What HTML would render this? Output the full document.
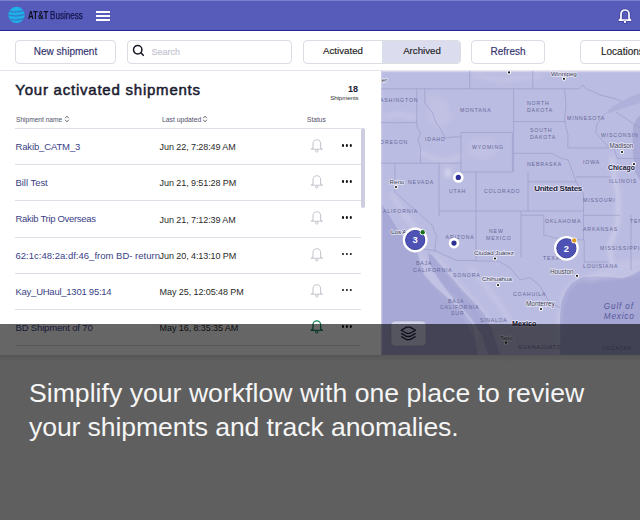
<!DOCTYPE html>
<html><head><meta charset="utf-8">
<style>
*{box-sizing:border-box;margin:0;padding:0}
html,body{width:640px;height:520px;overflow:hidden;background:#eeeeee;font-family:"Liberation Sans",sans-serif}
.abs{position:absolute}
#hdr{left:0;top:0;width:640px;height:31px;background:#575bba;border-bottom:1.6px solid #24249a}
#bar{left:0;top:31px;width:640px;height:40px;background:#fff;border-bottom:1px solid #e6e6ee}
.btn{position:absolute;border:1px solid #dcdce4;border-radius:4px;background:#fff;text-align:center;color:#32326e;font-size:10px;line-height:22px;-webkit-text-stroke:0.15px currentColor}
#left{left:0;top:71px;width:381px;height:284px;background:#fff}
#map{left:381px;top:71px;width:259px;height:284px;background:#aeb0d8;overflow:hidden}
.row{position:absolute;left:15px;width:346px;height:36px;border-top:1px solid #dedee6}
.nm{position:absolute;left:0.5px;top:12.1px;font-size:9.5px;color:#3c3f88;white-space:nowrap}
.dt{position:absolute;left:144.6px;top:13.2px;font-size:9px;letter-spacing:-0.08px;color:#2a2a2a;white-space:nowrap}
#ov{left:0;top:324px;width:640px;height:196px;background:rgba(0,0,0,0.6)}
.cap{left:29px;color:#f5f5f5;font-size:26.6px;line-height:30px;white-space:nowrap}
</style></head><body>
<div id="hdr" class="abs">
  <div class="abs" style="left:0;top:0;width:640px;height:1px;background:#7b7fcc"></div>
  <svg class="abs" style="left:8px;top:6px" width="18" height="18" viewBox="0 0 18 18">
    <defs><clipPath id="gc"><circle cx="8.5" cy="9" r="8.2"/></clipPath></defs>
    <circle cx="8.5" cy="9" r="8.2" fill="#1fb0e8"/>
    <g clip-path="url(#gc)" fill="#3b6fc4" opacity="0.8">
      <path d="M0 4.2 Q8 6.5 17 3.6 L17 5 Q8 8 0 5.4Z"/>
      <path d="M0 8.2 Q8 10.5 17 7.6 L17 9.1 Q8 12 0 9.5Z"/>
      <path d="M0 12.2 Q8 14.5 17 11.6 L17 13.1 Q8 16 0 13.5Z"/>
    </g>
  </svg>
  <div class="abs" style="left:27.5px;top:9.3px;font-size:10.5px;font-weight:bold;color:#0c0c20;white-space:nowrap;transform:scaleX(0.75);transform-origin:0 0">AT&amp;T</div><div class="abs" style="left:49.6px;top:9.3px;font-size:10.5px;color:#14144a;-webkit-text-stroke:0.25px #14144a;white-space:nowrap;transform:scaleX(0.77);transform-origin:0 0">Business</div>
  <div class="abs" style="left:96px;top:11px;width:14px;height:2px;background:#fff"></div>
  <div class="abs" style="left:96px;top:15px;width:14px;height:2px;background:#fff"></div>
  <div class="abs" style="left:96px;top:19px;width:14px;height:2px;background:#fff"></div>
  <svg class="abs" style="left:617px;top:7px" width="16" height="17" viewBox="0 0 16 17">
    <path d="M4 11.5 V7 A4 4 0 0 1 12 7 V11.5 L13.6 13.2 H2.4 Z" fill="none" stroke="#2a2c88" stroke-width="3" stroke-linejoin="round" opacity="0.6"/>
    <path d="M4 11.5 V7 A4 4 0 0 1 12 7 V11.5 L13.6 13.2 H2.4 Z" fill="none" stroke="#fff" stroke-width="1.7" stroke-linejoin="round"/>
    <circle cx="8" cy="14.8" r="1.9" fill="#2a2c88" opacity="0.6"/><circle cx="8" cy="14.8" r="1.2" fill="#fff"/>
  </svg>
</div>
<div id="bar" class="abs">
  <div class="btn" style="left:15px;top:8.5px;width:101px;height:24px">New shipment</div>
  <div class="btn" style="left:127px;top:8.5px;width:165px;height:24px;text-align:left;padding-left:23.5px;color:#c4c4d0;font-size:9px">Search
    <svg class="abs" style="left:4px;top:3.5px" width="14" height="14" viewBox="0 0 14 14"><circle cx="5.7" cy="5.7" r="4.2" fill="none" stroke="#1a1a2a" stroke-width="1.5"/><path d="M8.8 8.8 L11.3 11.3" stroke="#1a1a2a" stroke-width="1.6" stroke-linecap="round"/></svg></div>
  <div class="btn" style="left:303px;top:8.5px;width:158px;height:24px;overflow:hidden">
    <div class="abs" style="left:78px;top:0;width:80px;height:22px;background:#dcdcef"></div>
    <div class="abs" style="left:0;top:0;width:78px;color:#222;font-size:9.7px;line-height:20.4px">Activated</div>
    <div class="abs" style="left:78px;top:0;width:80px;color:#222;font-size:9.7px;line-height:20.4px">Archived</div>
  </div>
  <div class="btn" style="left:471px;top:8.5px;width:74px;height:24px">Refresh</div>
  <div class="btn" style="left:580px;top:8.5px;width:80px;height:24px;color:#222;text-align:left;padding-left:20px">Locations</div>
</div>
<div id="left" class="abs">
  <div class="abs" style="left:15.3px;top:9.8px;font-size:15px;font-weight:normal;-webkit-text-stroke:0.5px #1a1a30;color:#1a1a30;letter-spacing:0.77px;white-space:nowrap">Your activated shipments</div>
  <div class="abs" style="left:328px;top:13.2px;width:30px;text-align:right;font-size:9px;font-weight:bold;color:#1a1a30">18</div>
  <div class="abs" style="left:319px;top:23px;width:39.5px;text-align:right;font-size:6.2px;letter-spacing:-0.1px;color:#333">Shipments</div>
  <div class="abs" style="left:16px;top:44.5px;font-size:6.6px;color:#50506a;white-space:nowrap">Shipment name</div>
  <svg class="abs" style="left:64px;top:43.5px" width="6" height="8" viewBox="0 0 6 8"><path d="M1.2 3.2 L3 1.2 L4.8 3.2 M1.2 4.8 L3 6.8 L4.8 4.8" fill="none" stroke="#666" stroke-width="1"/></svg>
  <div class="abs" style="left:162px;top:44.5px;font-size:6.8px;color:#50506a;white-space:nowrap">Last updated</div>
  <svg class="abs" style="left:202px;top:43.5px" width="6" height="8" viewBox="0 0 6 8"><path d="M1.2 3.2 L3 1.2 L4.8 3.2 M1.2 4.8 L3 6.8 L4.8 4.8" fill="none" stroke="#666" stroke-width="1"/></svg>
  <div class="abs" style="left:307px;top:44.5px;font-size:6.6px;color:#50506a">Status</div>
  <div class="abs" style="left:361px;top:57px;width:4px;height:80px;background:#cdcde0;border-radius:2px"></div>
  <div class="row" style="top:57.0px"><div class="nm" style="letter-spacing:-0.14px">Rakib_CATM_3</div><div class="dt">Jun 22, 7:28:49 AM</div>
    <svg class="abs" style="left:295px;top:8px" width="14" height="16" viewBox="0 0 14 16"><path d="M3 11 V6.6 A3.8 3.8 0 0 1 10.6 6.6 V11 L12.4 12.3 H1.2 Z" fill="none" stroke="#c8c8d0" stroke-width="1.1" stroke-linejoin="round"/><circle cx="6.8" cy="13.9" r="1.2" fill="none" stroke="#c8c8d0" stroke-width="1"/></svg>
    <div class="abs" style="left:326.8px;top:15px;width:2.7px;height:2.7px;border-radius:50%;background:#111;box-shadow:3.9px 0 0 #111,7.8px 0 0 #111"></div>
  </div>
  <div class="row" style="top:93.2px"><div class="nm" style="letter-spacing:-0.04px">Bill Test</div><div class="dt">Jun 21, 9:51:28 PM</div>
    <svg class="abs" style="left:295px;top:8px" width="14" height="16" viewBox="0 0 14 16"><path d="M3 11 V6.6 A3.8 3.8 0 0 1 10.6 6.6 V11 L12.4 12.3 H1.2 Z" fill="none" stroke="#c8c8d0" stroke-width="1.1" stroke-linejoin="round"/><circle cx="6.8" cy="13.9" r="1.2" fill="none" stroke="#c8c8d0" stroke-width="1"/></svg>
    <div class="abs" style="left:326.8px;top:15px;width:2.7px;height:2.7px;border-radius:50%;background:#111;box-shadow:3.9px 0 0 #111,7.8px 0 0 #111"></div>
  </div>
  <div class="row" style="top:129.4px"><div class="nm" style="letter-spacing:-0.31px">Rakib Trip Overseas</div><div class="dt">Jun 21, 7:12:39 AM</div>
    <svg class="abs" style="left:295px;top:8px" width="14" height="16" viewBox="0 0 14 16"><path d="M3 11 V6.6 A3.8 3.8 0 0 1 10.6 6.6 V11 L12.4 12.3 H1.2 Z" fill="none" stroke="#c8c8d0" stroke-width="1.1" stroke-linejoin="round"/><circle cx="6.8" cy="13.9" r="1.2" fill="none" stroke="#c8c8d0" stroke-width="1"/></svg>
    <div class="abs" style="left:326.8px;top:15px;width:2.7px;height:2.7px;border-radius:50%;background:#111;box-shadow:3.9px 0 0 #111,7.8px 0 0 #111"></div>
  </div>
  <div class="row" style="top:165.6px"><div class="nm" style="letter-spacing:0.01px">62:1c:48:2a:df:46_from BD- return</div><div class="dt">Jun 20, 4:13:10 PM</div>
    <svg class="abs" style="left:295px;top:8px" width="14" height="16" viewBox="0 0 14 16"><path d="M3 11 V6.6 A3.8 3.8 0 0 1 10.6 6.6 V11 L12.4 12.3 H1.2 Z" fill="none" stroke="#c8c8d0" stroke-width="1.1" stroke-linejoin="round"/><circle cx="6.8" cy="13.9" r="1.2" fill="none" stroke="#c8c8d0" stroke-width="1"/></svg>
    <div class="abs" style="left:326.8px;top:15px;width:2.7px;height:2.7px;border-radius:50%;background:#111;box-shadow:3.9px 0 0 #111,7.8px 0 0 #111"></div>
  </div>
  <div class="row" style="top:201.8px"><div class="nm" style="letter-spacing:-0.25px">Kay_UHaul_1301 95:14</div><div class="dt">May 25, 12:05:48 PM</div>
    <svg class="abs" style="left:295px;top:8px" width="14" height="16" viewBox="0 0 14 16"><path d="M3 11 V6.6 A3.8 3.8 0 0 1 10.6 6.6 V11 L12.4 12.3 H1.2 Z" fill="none" stroke="#c8c8d0" stroke-width="1.1" stroke-linejoin="round"/><circle cx="6.8" cy="13.9" r="1.2" fill="none" stroke="#c8c8d0" stroke-width="1"/></svg>
    <div class="abs" style="left:326.8px;top:15px;width:2.7px;height:2.7px;border-radius:50%;background:#111;box-shadow:3.9px 0 0 #111,7.8px 0 0 #111"></div>
  </div>
  <div class="row" style="top:238.0px"><div class="nm" style="letter-spacing:-0.16px">BD Shipment of 70</div><div class="dt">May 16, 8:35:35 AM</div>
    <svg class="abs" style="left:295px;top:8px" width="14" height="16" viewBox="0 0 14 16"><path d="M3 11 V6.6 A3.8 3.8 0 0 1 10.6 6.6 V11 L12.4 12.3 H1.2 Z" fill="none" stroke="#17875c" stroke-width="1.3" stroke-linejoin="round"/><circle cx="6.8" cy="13.9" r="1.2" fill="none" stroke="#17875c" stroke-width="1"/></svg>
    <div class="abs" style="left:326.8px;top:15px;width:2.7px;height:2.7px;border-radius:50%;background:#111;box-shadow:3.9px 0 0 #111,7.8px 0 0 #111"></div>
  </div>
  <div class="row" style="top:274.2px"></div>
</div>
<div id="map" class="abs"><svg class="abs" style="left:0;top:0" width="259" height="284" viewBox="381 71 259 284">
<rect x="381" y="71" width="259" height="284" fill="#bbbce1"/>
<path d="M381 203 L392 220 L401 235 L410 244 L417 250.6 L420 262 L423.8 274.7 L432 284 L441 292 L450 300 L458.8 307.5 L466 315 L472 322.8 L478 355 H381 Z" fill="#a7a8d5"/>
<path d="M428 253 L432.5 256 L440 264 L450 276 L462 290 L474 302 L485 315 L492 330 L500 355 L488 355 L482 335 L472 320 L460 306 L448 292 L438 278 L430 264 Z" fill="#a7a8d5"/>
<path d="M640 270.8 L630 276 L622.5 278.4 L610 277 L598.4 276.3 L583 277.3 L572 282.8 L565.6 291.6 L561.3 302.5 L560 315.6 L560 355 H640 Z" fill="#a5a6d4"/>
<path d="M604.5 114.3 L612 107 L622 101 L632 96 L640 93 V103 L630 106 L618 110 Z" fill="#b0b1db"/>
<path d="M633 126 L637 118 L640 116 V180 L635 172 L632.5 150 Z" fill="#a9aad6"/>
<defs><filter id="bl" x="-20%" y="-20%" width="140%" height="140%"><feGaussianBlur stdDeviation="2"/></filter></defs>
<g filter="url(#bl)" fill="none" stroke="#fff" stroke-linecap="round" stroke-linejoin="round">
<path d="M428 95 L445 100 L452 118 L440 130 L430 122 Z" fill="#fff" fill-opacity="0.08" stroke="none"/>
<path d="M470 140 L490 138 L500 150 L485 160 L468 155 Z" fill="#fff" fill-opacity="0.07" stroke="none"/>
<path d="M585 280 L600 270 L620 262 L640 258 V268 L615 274 L590 283 Z" fill="#fff" fill-opacity="0.12" stroke="none"/>
<path d="M420 152 L432 158 L446 161 L460 157" stroke-width="3" stroke-opacity="0.2"/>
<path d="M384 117 L400 114 L416 118" stroke-width="2" stroke-opacity="0.25"/>
<ellipse cx="448" cy="173" rx="3" ry="4.5" fill="#fff" fill-opacity="0.4" stroke="none"/>
<path d="M392 195 L405 215 L418 232" stroke-width="3" stroke-opacity="0.2"/>
<path d="M421 256 L428 272 L440 288 L455 302 L468 318 L476 335" stroke-width="5" stroke-opacity="0.15"/>
<path d="M436 256 L448 272 L462 288 L476 304 L490 322" stroke-width="2.5" stroke-opacity="0.22"/>
<path d="M470 268 L486 286 L500 305 L512 325" stroke-width="4" stroke-opacity="0.15"/>
<path d="M558 355 L558 330 L561 305 L566 290 L574 282 L590 277 L610 278 L640 272" stroke-width="2.5" stroke-opacity="0.22"/>
<path d="M475 75 L500 80 L540 76" stroke-width="4" stroke-opacity="0.12"/>
<path d="M611.6 158 L614 176 L618 195 L618 222 L612 240 L609.4 248 L612 265" stroke-width="2" stroke-opacity="0.5"/>
</g>
<rect x="381" y="71" width="259" height="1.2" fill="#d4d4ec"/><rect x="381" y="71" width="1.3" height="284" fill="#cbcbe8"/>
<g fill="none" stroke="#9c9dcb" stroke-width="0.7">
<path d="M381 88.8 H578.8 L583 85 L586 89 L593.7 91.7 L600 95 L613 98 L621.7 101.4"/>
<path d="M469.7 71 V88.8"/>
<path d="M532.8 71 V88.8"/>
<path d="M381 122.7 H417"/>
<path d="M416.8 88.8 V126 L420.5 133.6 L418 140 L420.5 148 V163.2"/>
<path d="M424.8 88.8 V103 L432 112 L436.9 124.9 L439 126 L442 132 L445.6 138 L452 137 L461 137"/>
<path d="M461 132.5 H512.4 V172 H461 Z"/>
<path d="M381 163.2 H461"/>
<path d="M439 163.2 V216"/>
<path d="M394.9 163.2 V192 L433 226 L434 231 L436.6 235.4 L435 249 L436 252"/>
<path d="M476 172 V260.5"/>
<path d="M513.6 88.8 V172"/>
<path d="M513.6 121.6 H566"/>
<path d="M513.6 153.3 H552 L560 158 L568 160"/>
<path d="M564.5 88.8 L566 105 L564.5 120.5 L568 135 L567.8 148"/>
<path d="M568 147.9 H609.4"/>
<path d="M604.5 114.3 L597 124 L595.8 132.6 L602 140 L610 148.8 L614 148.8 L617.4 158.5 H640"/>
<path d="M616 112 L640 128"/>
<path d="M528 181.8 H576 L580 188 L583.5 193.8"/>
<path d="M528 172 V211"/>
<path d="M576 176.9 H611"/>
<path d="M568 160 L572 170 L576 181.8"/>
<path d="M439 211 H583"/>
<path d="M521 211 V257"/>
<path d="M521 215.3 H543.8 V235 L555 238 L570 239 L583 240"/>
<path d="M583.5 193.8 V240"/>
<path d="M583.5 215.3 H620"/>
<path d="M631 215 V270"/>
<path d="M418 248.4 L434.7 250.6 L456.6 260.5 H476 V261 H497.5 L510 267.5 L520 280 L530 277.5 L540 286 L545 295 L550 302.5 L560 307.5"/>
<path d="M584.2 240 V262 H609"/>
</g>
<g font-family="Liberation Sans"><text x="380" y="102" font-size="5.2" letter-spacing="0.85" fill="#66679a" font-weight="normal" font-style="normal">ASHINGTON</text><text x="460" y="112" font-size="5.2" letter-spacing="0.85" fill="#66679a" font-weight="normal" font-style="normal">MONTANA</text><text x="425" y="141" font-size="5.2" letter-spacing="0.85" fill="#66679a" font-weight="normal" font-style="normal">IDAHO</text><text x="380" y="144" font-size="5.2" letter-spacing="0.85" fill="#66679a" font-weight="normal" font-style="normal">OREGON</text><text x="472" y="149" font-size="5.2" letter-spacing="0.85" fill="#66679a" font-weight="normal" font-style="normal">WYOMING</text><text x="408" y="184" font-size="5.2" letter-spacing="0.85" fill="#66679a" font-weight="normal" font-style="normal">NEVADA</text><text x="449" y="193" font-size="5.2" letter-spacing="0.85" fill="#66679a" font-weight="normal" font-style="normal">UTAH</text><text x="484" y="193" font-size="5.2" letter-spacing="0.85" fill="#66679a" font-weight="normal" font-style="normal">COLORADO</text><text x="527" y="105" font-size="5.2" letter-spacing="0.85" fill="#66679a" font-weight="normal" font-style="normal">NORTH</text><text x="527" y="111.5" font-size="5.2" letter-spacing="0.85" fill="#66679a" font-weight="normal" font-style="normal">DAKOTA</text><text x="530" y="132" font-size="5.2" letter-spacing="0.85" fill="#66679a" font-weight="normal" font-style="normal">SOUTH</text><text x="530" y="139" font-size="5.2" letter-spacing="0.85" fill="#66679a" font-weight="normal" font-style="normal">DAKOTA</text><text x="567" y="120" font-size="5.2" letter-spacing="0.85" fill="#66679a" font-weight="normal" font-style="normal">MINNESOTA</text><text x="601" y="137" font-size="5.2" letter-spacing="0.85" fill="#66679a" font-weight="normal" font-style="normal">WISCONSIN</text><text x="527" y="166" font-size="5.2" letter-spacing="0.85" fill="#66679a" font-weight="normal" font-style="normal">NEBRASKA</text><text x="583" y="164" font-size="5.2" letter-spacing="0.85" fill="#66679a" font-weight="normal" font-style="normal">IOWA</text><text x="609" y="183" font-size="5.2" letter-spacing="0.85" fill="#66679a" font-weight="normal" font-style="normal">ILLINOIS</text><text x="583" y="201.5" font-size="5.2" letter-spacing="0.85" fill="#66679a" font-weight="normal" font-style="normal">MISSOURI</text><text x="545" y="223" font-size="5.2" letter-spacing="0.85" fill="#66679a" font-weight="normal" font-style="normal">OKLAHOMA</text><text x="583" y="231" font-size="5.2" letter-spacing="0.85" fill="#66679a" font-weight="normal" font-style="normal">ARKANSAS</text><text x="383" y="212.5" font-size="5.2" letter-spacing="0.85" fill="#66679a" font-weight="normal" font-style="normal">ALIFORNIA</text><text x="445.6" y="238.5" font-size="5.2" letter-spacing="0.85" fill="#66679a" font-weight="normal" font-style="normal">ARIZONA</text><text x="489" y="233" font-size="5.2" letter-spacing="0.85" fill="#66679a" font-weight="normal" font-style="normal">NEW</text><text x="486" y="240" font-size="5.2" letter-spacing="0.85" fill="#66679a" font-weight="normal" font-style="normal">MEXICO</text><text x="543" y="260" font-size="5.2" letter-spacing="0.85" fill="#66679a" font-weight="normal" font-style="normal">TEXAS</text><text x="600" y="250" font-size="5.2" letter-spacing="0.85" fill="#66679a" font-weight="normal" font-style="normal">MISSISSIPPI</text><text x="583" y="267.5" font-size="5.2" letter-spacing="0.85" fill="#66679a" font-weight="normal" font-style="normal">LOUISIANA</text><text x="630" y="223" font-size="5.2" letter-spacing="0.85" fill="#66679a" font-weight="normal" font-style="normal">TEN</text><text x="416" y="265" font-size="5.2" letter-spacing="0.85" fill="#66679a" font-weight="normal" font-style="normal">BAJA</text><text x="413" y="272" font-size="5.2" letter-spacing="0.85" fill="#66679a" font-weight="normal" font-style="normal">CALIFORNIA</text><text x="453" y="277" font-size="5.2" letter-spacing="0.85" fill="#66679a" font-weight="normal" font-style="normal">SONORA</text><text x="513" y="295.5" font-size="5.2" letter-spacing="0.85" fill="#66679a" font-weight="normal" font-style="normal">COAHUILA</text><text x="448" y="303" font-size="5.2" letter-spacing="0.85" fill="#66679a" font-weight="normal" font-style="normal">BAJA</text><text x="440" y="309" font-size="5.2" letter-spacing="0.85" fill="#66679a" font-weight="normal" font-style="normal">CALIFORNIA</text><text x="451" y="315" font-size="5.2" letter-spacing="0.85" fill="#66679a" font-weight="normal" font-style="normal">SUR</text><text x="480" y="322" font-size="5.2" letter-spacing="0.7" fill="#66679a" font-weight="normal" font-style="normal">SINALOA</text><text x="500" y="340" font-size="5.8" letter-spacing="0" fill="#3a3a56" font-weight="normal" font-style="normal" stroke="#e6e6f4" stroke-width="1.5" stroke-linejoin="round" paint-order="stroke">Tepic</text><text x="518" y="349" font-size="5.2" letter-spacing="0.85" fill="#66679a" font-weight="normal" font-style="normal">GUANAJUATO</text><text x="602" y="350" font-size="5.2" letter-spacing="0.85" fill="#66679a" font-weight="normal" font-style="normal">YUCATAN</text><text x="381.5" y="82" font-size="6.2" letter-spacing="0" fill="#3a3a56" font-weight="normal" font-style="normal" stroke="#e6e6f4" stroke-width="1.5" stroke-linejoin="round" paint-order="stroke">er</text><text x="551" y="75.6" font-size="6.2" letter-spacing="0" fill="#3a3a56" font-weight="normal" font-style="normal" stroke="#e6e6f4" stroke-width="1.5" stroke-linejoin="round" paint-order="stroke">Winnipeg</text><text x="389.5" y="183.6" font-size="6.2" letter-spacing="0" fill="#3a3a56" font-weight="normal" font-style="normal" stroke="#e6e6f4" stroke-width="1.5" stroke-linejoin="round" paint-order="stroke">Reno</text><text x="391" y="234.4" font-size="6.2" letter-spacing="0" fill="#222240" font-weight="normal" font-style="normal" stroke="#e6e6f4" stroke-width="1.5" stroke-linejoin="round" paint-order="stroke">Los A</text><text x="474" y="254.9" font-size="6.2" letter-spacing="0" fill="#3a3a56" font-weight="normal" font-style="normal" stroke="#e6e6f4" stroke-width="1.5" stroke-linejoin="round" paint-order="stroke">Ciudad Juárez</text><text x="482" y="280.9" font-size="6.2" letter-spacing="0" fill="#3a3a56" font-weight="normal" font-style="normal" stroke="#e6e6f4" stroke-width="1.5" stroke-linejoin="round" paint-order="stroke">Chihuahua</text><text x="609.5" y="148" font-size="6.3" letter-spacing="0" fill="#3a3a56" font-weight="normal" font-style="normal" stroke="#e6e6f4" stroke-width="1.5" stroke-linejoin="round" paint-order="stroke">Madison</text><text x="608" y="170.4" font-size="6.8" letter-spacing="0" fill="#20203e" font-weight="bold" font-style="normal" stroke="#e6e6f4" stroke-width="1.5" stroke-linejoin="round" paint-order="stroke">Chicago</text><text x="534.2" y="191.4" font-size="8" letter-spacing="-0.25" fill="#20203e" font-weight="bold" font-style="normal" stroke="#e6e6f4" stroke-width="1.5" stroke-linejoin="round" paint-order="stroke">United States</text><text x="550" y="273.6" font-size="6.3" letter-spacing="0" fill="#3a3a56" font-weight="normal" font-style="normal" stroke="#e6e6f4" stroke-width="1.5" stroke-linejoin="round" paint-order="stroke">Houston</text><text x="526" y="305.6" font-size="6.4" letter-spacing="0" fill="#3a3a56" font-weight="normal" font-style="normal" stroke="#e6e6f4" stroke-width="1.5" stroke-linejoin="round" paint-order="stroke">Monterrey</text><text x="512" y="326.4" font-size="7.2" letter-spacing="0" fill="#20203e" font-weight="bold" font-style="normal" stroke="#e6e6f4" stroke-width="1.5" stroke-linejoin="round" paint-order="stroke">Mexico</text><text x="603.8" y="309.3" font-size="8.2" letter-spacing="0.85" fill="#55569a" font-weight="normal" font-style="italic">Gulf of</text><text x="603.8" y="319.3" font-size="8.2" letter-spacing="0.8" fill="#55569a" font-weight="normal" font-style="italic">Mexico</text></g>
<circle cx="506" cy="342.7" r="2" fill="#fff"/><circle cx="506" cy="342.7" r="1.1" fill="#111"/>
<circle cx="509" cy="72.4" r="2" fill="#fff"/><circle cx="509" cy="72.4" r="1.1" fill="#111"/>
<circle cx="564" cy="78.8" r="2" fill="#fff"/><circle cx="564" cy="78.8" r="1.1" fill="#111"/>
<circle cx="396" cy="187" r="2" fill="#fff"/><circle cx="396" cy="187" r="1.1" fill="#111"/>
<circle cx="622" cy="152" r="2" fill="#fff"/><circle cx="622" cy="152" r="1.1" fill="#111"/>
<circle cx="634" cy="164" r="2" fill="#fff"/><circle cx="634" cy="164" r="1.1" fill="#111"/>
<circle cx="495" cy="258.5" r="2" fill="#fff"/><circle cx="495" cy="258.5" r="1.1" fill="#111"/>
<circle cx="498" cy="285" r="2" fill="#fff"/><circle cx="498" cy="285" r="1.1" fill="#111"/>
<circle cx="577" cy="275.8" r="2" fill="#fff"/><circle cx="577" cy="275.8" r="1.1" fill="#111"/>
<circle cx="541" cy="309" r="2" fill="#fff"/><circle cx="541" cy="309" r="1.1" fill="#111"/>
<circle cx="458.3" cy="177.4" r="5.3" fill="#fff"/><circle cx="458.3" cy="177.4" r="2.6" fill="#2c2f96"/>
<circle cx="454" cy="243.1" r="5.3" fill="#fff"/><circle cx="454" cy="243.1" r="2.6" fill="#2c2f96"/>
<circle cx="415.2" cy="240" r="12.4" fill="#fff"/><circle cx="415.2" cy="240" r="9.6" fill="#4e52b4" stroke="#3c40a0" stroke-width="1"/>
<text x="415.2" y="243.4" text-anchor="middle" font-size="9.4" font-weight="bold" fill="#fff" font-family="Liberation Sans">3</text>
<circle cx="422.7" cy="232.3" r="2.9" fill="#fff"/><circle cx="422.7" cy="232.3" r="2.2" fill="#16701e"/>
<circle cx="566.4" cy="248.3" r="12.4" fill="#fff"/><circle cx="566.4" cy="248.3" r="9.6" fill="#4e52b4" stroke="#3c40a0" stroke-width="1"/>
<text x="566.4" y="251.70000000000002" text-anchor="middle" font-size="9.4" font-weight="bold" fill="#fff" font-family="Liberation Sans">2</text>
<circle cx="574.1999999999999" cy="240.4" r="2.9" fill="#fff"/><circle cx="574.1999999999999" cy="240.4" r="2.2" fill="#e09a20"/>
<rect x="391" y="321" width="35" height="25" rx="4" fill="#fff" fill-opacity="0.5" stroke="#9a9ac0" stroke-width="0.6"/>
<g fill="none" stroke="#1e1e46" stroke-width="1.3" stroke-linejoin="round"><path d="M401.2 330.2 L406.6 327.1 H410 L415.6 330.2 L410 333.3 H406.6 Z"/><path d="M401.2 333.4 L406.6 336.5 H410 L415.6 333.4"/><path d="M401.2 336.5 L406.6 339.6 H410 L415.6 336.5"/></g>
</svg></div><!--map-->
<div class="abs" style="left:0;top:355px;width:640px;height:7px;background:linear-gradient(#d8d8d8,#eeeeee)"></div>
<div id="ov" class="abs"></div>
<div id="cap1" class="abs cap" style="top:378px;letter-spacing:0.02px">Simplify your workflow with one place to review</div><div id="cap2" class="abs cap" style="top:412px;letter-spacing:-0.1px">your shipments and track anomalies.</div>
</body></html>
